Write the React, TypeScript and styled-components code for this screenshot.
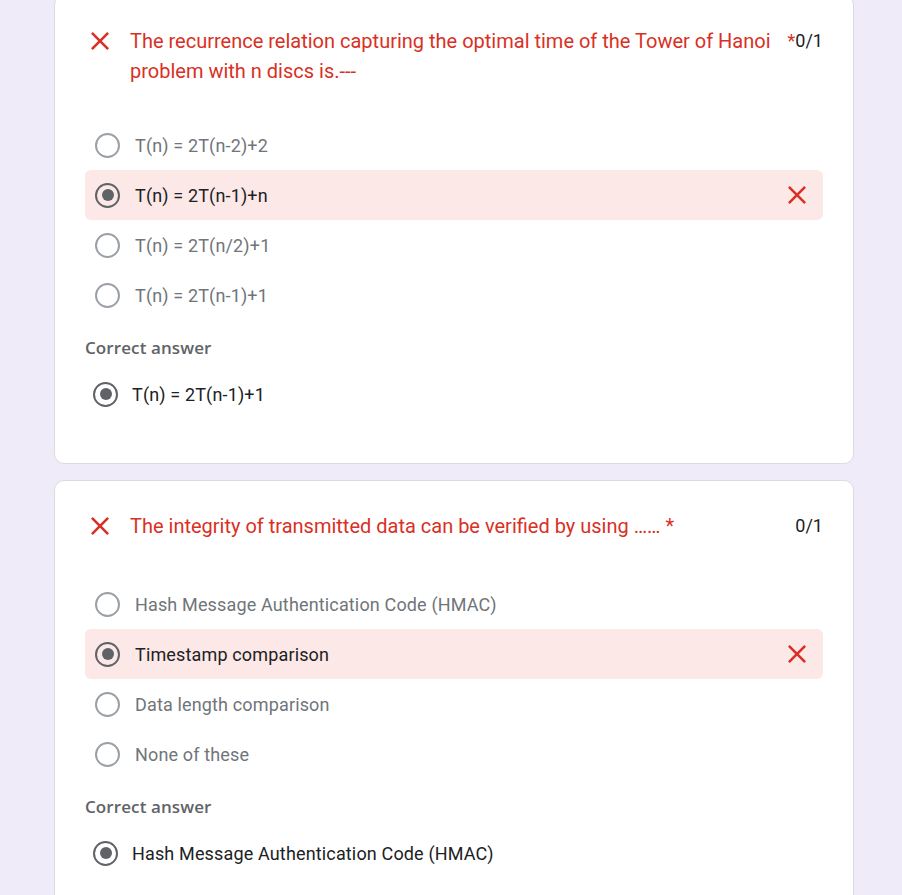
import React from "react";
import styled, { createGlobalStyle } from "styled-components";

const Global = createGlobalStyle`
  html, body {
    margin: 0;
    padding: 0;
    background: #f0ebf8;
    font-family: Roboto, "Liberation Sans", Arial, sans-serif;
  }
`;

const Page = styled.div`
  display: flex;
  flex-direction: column;
  gap: 16px;
  width: 800px;
  margin: -5px 0 0 54px;
`;

const Card = styled.section`
  box-sizing: border-box;
  background: #fff;
  border: 1px solid #dadce0;
  border-radius: 10px;
  padding: 30px 30px 44px 30px;
`;

const Header = styled.div`
  display: flex;
  align-items: flex-start;
  min-height: 34px;
  margin-bottom: 34px;
`;

const IconBox = styled.div<{ $size?: number }>`
  flex: none;
  width: ${(p) => p.$size ?? 30}px;
  height: ${(p) => p.$size ?? 30}px;
  display: flex;
  align-items: center;
  justify-content: center;
  color: #d93025;
`;

const TitleIcon = styled(IconBox)`
  margin-right: 15px;
`;

const Title = styled.div`
  flex: 1;
  font-size: 20px;
  line-height: 30px;
  color: #d93025;
`;

const Score = styled.div`
  flex: none;
  font-size: 18px;
  line-height: 30px;
  color: #202124;
  margin-left: 6px;
`;

const Star = styled.span`
  color: #d93025;
`;

const Options = styled.div`
  display: flex;
  flex-direction: column;
`;

const Row = styled.div<{ $wrong?: boolean; $indent?: number }>`
  display: flex;
  align-items: center;
  height: 50px;
  padding: 0 11px 0 ${(p) => p.$indent ?? 10}px;
  border-radius: 6px;
  background: ${(p) => (p.$wrong ? "#fce8e6" : "transparent")};
`;

const Radio = styled.span<{ $checked?: boolean }>`
  flex: none;
  box-sizing: border-box;
  width: 25px;
  height: 25px;
  border-radius: 50%;
  border: 2.5px solid ${(p) => (p.$checked ? "#5f6368" : "#9aa0a6")};
  display: flex;
  align-items: center;
  justify-content: center;
  &::after {
    content: "";
    display: ${(p) => (p.$checked ? "block" : "none")};
    width: 12px;
    height: 12px;
    border-radius: 50%;
    background: #5f6368;
  }
`;

const OptionText = styled.span<{ $dark?: boolean; $gap?: number }>`
  flex: 1;
  margin-left: ${(p) => p.$gap ?? 15}px;
  font-size: 18px;
  letter-spacing: 0.15px;
  color: ${(p) => (p.$dark ? "#202124" : "#70757a")};
`;

const Label = styled.div`
  margin-top: 15px;
  font-family: "Open Sans", Roboto, sans-serif;
  font-size: 17px;
  line-height: 25px;
  font-weight: 600;
  letter-spacing: 0.1px;
  color: #5f6368;
`;

const CorrectList = styled.div`
  margin-top: 9px;
`;

const CloseIcon = ({ size = 18 }: { size?: number }) => (
  <svg width={size} height={size} viewBox="5 5 14 14" fill="currentColor">
    <path d="M19 6.41L17.59 5 12 10.59 6.41 5 5 6.41 10.59 12 5 17.59 6.41 19 12 13.41 17.59 19 19 17.59 13.41 12z" />
  </svg>
);

type Q = {
  title: string;
  starInScore: boolean;
  options: string[];
  chosen: number;
  correct: string;
};

const questions: Q[] = [
  {
    title:
      "The recurrence relation capturing the optimal time of the Tower of Hanoi problem with n discs is.---",
    starInScore: true,
    options: [
      "T(n) = 2T(n-2)+2",
      "T(n) = 2T(n-1)+n",
      "T(n) = 2T(n/2)+1",
      "T(n) = 2T(n-1)+1",
    ],
    chosen: 1,
    correct: "T(n) = 2T(n-1)+1",
  },
  {
    title: "The integrity of transmitted data can be verified by using \u2026\u2026",
    starInScore: false,
    options: [
      "Hash Message Authentication Code (HMAC)",
      "Timestamp comparison",
      "Data length comparison",
      "None of these",
    ],
    chosen: 1,
    correct: "Hash Message Authentication Code (HMAC)",
  },
];

const Question = ({ q }: { q: Q }) => (
  <Card>
    <Header>
      <TitleIcon>
        <CloseIcon />
      </TitleIcon>
      <Title>
        {q.title}
        {!q.starInScore && " *"}
      </Title>
      <Score>
        {q.starInScore && <Star>*</Star>}0/1
      </Score>
    </Header>
    <Options>
      {q.options.map((o, i) => (
        <Row key={o} $wrong={i === q.chosen}>
          <Radio $checked={i === q.chosen} />
          <OptionText $dark={i === q.chosen}>{o}</OptionText>
          {i === q.chosen && (
            <IconBox>
              <CloseIcon />
            </IconBox>
          )}
        </Row>
      ))}
    </Options>
    <Label>Correct answer</Label>
    <CorrectList>
      <Row $indent={8}>
        <Radio $checked />
        <OptionText $dark $gap={14}>
          {q.correct}
        </OptionText>
      </Row>
    </CorrectList>
  </Card>
);

export default function App() {
  return (
    <>
      <Global />
      <Page>
        {questions.map((q) => (
          <Question key={q.title} q={q} />
        ))}
      </Page>
    </>
  );
}
